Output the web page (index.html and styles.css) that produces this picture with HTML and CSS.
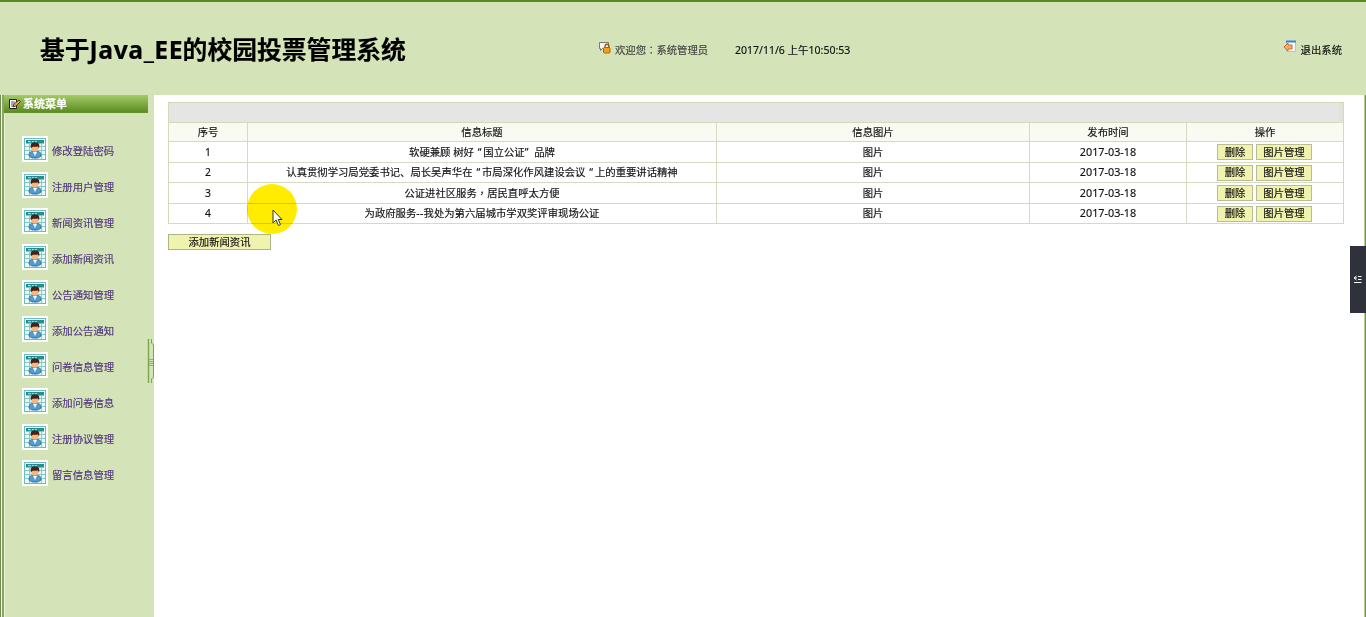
FILE: index.html
```html
<!DOCTYPE html>
<html lang="zh-CN">
<head>
<meta charset="utf-8">
<title>基于Java_EE的校园投票管理系统</title>
<link rel="stylesheet" href="styles.css">
</head>
<body>
<svg class="defs" aria-hidden="true">
  <symbol id="user" viewBox="0 0 26 26">
    <rect width="26" height="26" fill="#fafffc"/>
    <rect x="2.500" y="2.500" width="21" height="21" fill="#e9fbf7" stroke="#71b9c5"/>
    <path d="M3 10.500H23M3 14.500H23M3 18.500H23M7.500 8V23M13.500 8V23M19.500 8V23" stroke="#8bc7c9" fill="none"/>
    <rect x="4" y="4" width="18" height="3.500" fill="#238e91"/>
    <path d="M6 5.700h3m1 0h2m1 0h2" stroke="#b9e9e4"/>
    <path d="M7 20c0-4 2-5 6-5s6 1 6 5l-3 2h-6z" fill="#4e9cd0" stroke="#27679b" stroke-width=".8"/>
    <path d="m11 16 2 4 2-4z" fill="#eefaff"/>
    <circle cx="13" cy="12" r="3.700" fill="#f6b77f"/>
    <path d="M9 12.500c-1.500-6 2-6 4-6s5.500 0 4 6l-1-2c-3 1-5-1-7 2z" fill="#48231a"/>
  </symbol>
</svg>
<header class="top">
  <h1 class="title">基于<span class="latin">Java_EE</span>的校园投票管理系统</h1>
  <div class="welcome">
    <svg class="lock" viewBox="0 0 13 13"><path d="M1.500 1.500h9v6h-6l-2 2v-2h-1z" fill="#f5f4ef" stroke="#77797d"/><path d="M7 7V5.500c0-3 4-3 4 0V7" fill="none" stroke="#9b5c0b" stroke-width="1.300"/><rect x="5.500" y="6.500" width="6.500" height="5.500" rx="1" fill="#f3a11c" stroke="#ad6508"/></svg>
    <span>欢迎您<span class="mid" lang="zh-TW">：</span>系统管理员</span>
  </div>
  <time class="clock">2017/11/6 上午10:50:53</time>
  <a class="exit"><svg viewBox="0 0 13 13"><path d="M3.500 1.500h9v10h-9z" fill="#f5f9ff" stroke="#a9c4e3"/><path d="M3 1.500h10" stroke="#3c82d5" stroke-width="2"/><path d="m1 7 4-4v2h4v4H5v2z" fill="#ffad66" stroke="#d56a20"/></svg><span>退出系统</span></a>
</header>
<div class="body">
  <aside class="side">
    <div class="menu-head"><svg viewBox="0 0 13 12"><path d="M1.500 1.500h7v9h-7z" fill="#fff" stroke="#222"/><path d="M3 4h4M3 6h3M3 8h3" stroke="#555"/><path d="m5 9 1-3 5-4 1.500 1.500L8 8z" fill="#e8a360" stroke="#40220e" stroke-width=".8"/></svg><b>系统菜单</b></div>
    <nav class="menu">
      <a><svg><use href="#user"/></svg><span>修改登陆密码</span></a>
      <a><svg><use href="#user"/></svg><span>注册用户管理</span></a>
      <a><svg><use href="#user"/></svg><span>新闻资讯管理</span></a>
      <a><svg><use href="#user"/></svg><span>添加新闻资讯</span></a>
      <a><svg><use href="#user"/></svg><span>公告通知管理</span></a>
      <a><svg><use href="#user"/></svg><span>添加公告通知</span></a>
      <a><svg><use href="#user"/></svg><span>问卷信息管理</span></a>
      <a><svg><use href="#user"/></svg><span>添加问卷信息</span></a>
      <a><svg><use href="#user"/></svg><span>注册协议管理</span></a>
      <a><svg><use href="#user"/></svg><span>留言信息管理</span></a>
    </nav>
  </aside>
  <main class="main">
    <div class="grid">
      <div class="band"></div>
      <div class="row head"><span>序号</span><span>信息标题</span><span>信息图片</span><span>发布时间</span><span>操作</span></div>
      <div class="row"><span>1</span><span><em>软硬兼顾 树好<i class="open">“</i>国立公证<i class="close">”</i>品牌</em></span><span>图片</span><span class="date">2017-03-18</span><span class="ops"><button>删除</button><button class="wide">图片管理</button></span></div>
      <div class="row"><span>2</span><span><em>认真贯彻学习局党委书记、局长吴声华在<i class="open">“</i>市局深化作风建设会议<i class="open">“</i>上的重要讲话精神</em></span><span>图片</span><span class="date">2017-03-18</span><span class="ops"><button>删除</button><button class="wide">图片管理</button></span></div>
      <div class="row"><span>3</span><span><em>公证进社区服务<i class="mid" lang="zh-TW">，</i>居民直呼太方便</em></span><span>图片</span><span class="date">2017-03-18</span><span class="ops"><button>删除</button><button class="wide">图片管理</button></span></div>
      <div class="row"><span>4</span><span><em>为政府服务<i class="dash">--</i>我处为第六届城市学双奖评审现场公证</em></span><span>图片</span><span class="date">2017-03-18</span><span class="ops"><button>删除</button><button class="wide">图片管理</button></span></div>
    </div>
    <button class="add">添加新闻资讯</button>
  </main>
</div>
<svg class="handle" viewBox="0 0 8 46"><path d="M1.500 1v44" stroke="#79a64c" stroke-width="1.400"/><path d="M4.500 1v4l2 2v32l-2 2v4" fill="none" stroke="#7c9c68"/><path d="M2 21.500h4M2 23.500h4M2 25.500h4M2 27.500h4" stroke="#8fae72"/></svg>
<div class="spot"></div>
<svg class="cursor" viewBox="0 0 12 18"><path d="M1 1v13l3-3 2.500 5.500 2-1L6.200 10.500H10z" fill="#fff" stroke="#333"/></svg>
<div class="tab"><svg viewBox="0 0 9 9"><path d="M5 1.500h3.500M5 4.500h3.500M1 7.500h7.500M3.500 1 1 3l2.500 2M1 3h3" fill="none" stroke="#fff"/></svg></div>
</body>
</html>
```
FILE: styles.css
```css
* { box-sizing: border-box; }
body {
  margin: 0;
  height: 617px;
  overflow: hidden;
  display: flex;
  flex-direction: column;
  position: relative;
  background: #fff;
  color: #111;
  font: 10.35px/16px "Noto Sans", "Noto Sans CJK SC", sans-serif;
  -webkit-text-stroke: .15px;
  white-space: nowrap;
}
svg { display: block; flex: none; }
em, i { font-style: normal; }
.mid { font-family: "Noto Sans CJK TC", sans-serif; line-height: 1; }
.dash { letter-spacing: .3px; }
.open, .close { display: inline-block; width: 9.5px; }
.open { text-align: center; padding-left: 2px; }
.defs { position: absolute; width: 0; height: 0; }
.top {
  height: 95px;
  flex: none;
  display: flex;
  align-items: center;
  padding: 3px 24px 0 40px;
  background: #d4e4b8;
  border-top: 2px solid #5c8a22;
}
.title { width: 559px; margin: 0 0 2px; font-size: 24.8px; line-height: 36px; font-weight: 700; color: #000; }
.latin { display: inline-block; width: 93px; font-size: 24.8px; letter-spacing: .5px; }
.welcome { display: flex; gap: 3px; width: 136px; color: #444; }
.lock { width: 13px; height: 13px; margin: -1px 1px 0 -1px; }
.clock { font-size: 10.5px; }
.exit { display: flex; gap: 5px; margin-left: auto; }
.exit svg { width: 13px; height: 13px; margin-top: -2px; }
.body {
  flex: 1;
  display: flex;
  border-left: 1px solid #718b50;
  border-right: 1px solid #6f9640;
}
.side {
  width: 153px;
  padding: 0 6px 0 2px;
  background: #d4e4b8;
  border-left: 1px solid #eff7df;
  box-shadow: inset 2px 0 #8aa568, inset 3px 0 #e7f1d3;
}
.menu-head {
  display: flex;
  align-items: center;
  gap: 2px;
  height: 18px;
  padding-left: 4px;
  border-bottom: 1px solid #63902b;
  background: linear-gradient(#a3cb69, #5d8d20);
  color: #fff;
  font-size: 11px;
}
.menu-head svg { width: 13px; height: 12px; }
.menu { display: flex; flex-direction: column; gap: 10px; padding: 23px 0 0 18px; color: #51357f; }
.menu a { display: flex; height: 26px; gap: 4px; }
.menu svg { width: 26px; height: 26px; }
.menu span { padding-top: 7px; }
.main { flex: 1; padding: 7px 20px 0 14px; border-right: 1px solid #b8cf9b; }
.grid { width: 1176px; border: 1px solid #d5d8b9; border-bottom: 0; }
.band { height: 20px; background: #e5e5e5; border-right: 4px solid #e2e3d6; border-bottom: 1px solid #d5d8b9; }
.row { display: grid; grid-template-columns: 79px 469px 313px 157px 156px; height: 20.5px; }
.row.head { height: 19px; background: #f9faf2; }
.row > span {
  display: flex;
  align-items: center;
  justify-content: center;
  border-right: 1px solid #d7dac2;
  border-bottom: 1px solid #d7dac2;
}
.row > span:last-child { border-right: 0; }
.row > .date { font-size: 10.8px; }
.row > .ops { gap: 3px; padding: 1px 1px 0 0; }
button {
  width: 36px;
  height: 16px;
  padding: 0;
  border: 1px solid #b8bd98;
  background: #f0f3ae;
  color: #111;
  font: inherit;
  line-height: 13px;
}
button.wide { width: 56px; }
button.add { display: block; width: 103px; margin-top: 10px; border-color: #abb789; }
.handle { position: absolute; left: 147px; top: 338px; width: 8px; height: 46px; }
.spot { position: absolute; left: 247px; top: 184px; width: 50px; height: 50px; border-radius: 50%; background: #ffec00; mix-blend-mode: multiply; }
.cursor { position: absolute; left: 272px; top: 209px; width: 12px; height: 18px; }
.tab { position: absolute; left: 1350px; top: 246px; width: 16px; height: 67px; display: grid; place-items: center; background: #2f323b; }
.tab svg { width: 9px; height: 9px; margin-right: 2px; }
```
